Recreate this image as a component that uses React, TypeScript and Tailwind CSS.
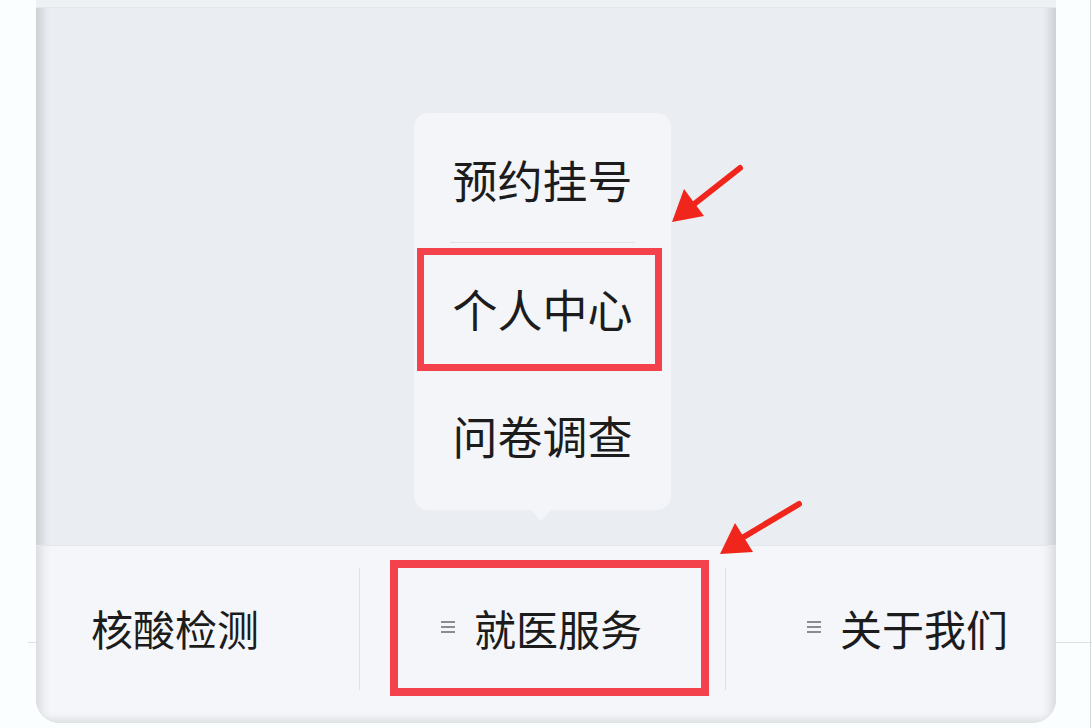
import React from "react";

const font = { fontFamily: '"Noto Sans CJK SC", "Noto Sans", sans-serif' };

function MenuIcon() {
  return (
    <div className="flex flex-col gap-[3.5px] w-[14px] mr-[19px] mt-[-4px]">
      <div className="h-[1.5px] bg-[#8a8d90]" />
      <div className="h-[1.5px] bg-[#8a8d90]" />
      <div className="h-[1.5px] bg-[#8a8d90]" />
    </div>
  );
}

export default function App() {
  return (
    <div className="relative w-[1092px] h-[728px] bg-[#fbfefe] overflow-hidden" style={font}>
      {/* faint background lines */}
      <div className="absolute left-[1056px] top-[642px] w-[36px] h-px bg-[#dde1e3]" />
      <div className="absolute left-[28px] top-[642px] w-[10px] h-px bg-[#dde1e3]" />
      <div className="absolute left-[1090px] top-0 w-px h-[728px] bg-[#d6d9db]" />

      {/* phone panel */}
      <div className="relative ml-[36px] w-[1020px] h-[723px] rounded-b-[24px] bg-[#eaedf1] overflow-hidden flex flex-col shadow-[inset_14px_0_10px_-8px_rgba(0,0,0,0.13),inset_-14px_0_10px_-8px_rgba(0,0,0,0.13)]">
        <div className="h-[8px] bg-[#eef1f4] border-b border-[#e4e7eb]" />
        <div className="flex-1" />
        {/* tab bar */}
        <div className="h-[178px] bg-[#f4f6f9] border-t border-[#e3e6ea] flex items-start pt-[22px] shadow-[inset_14px_0_10px_-8px_rgba(0,0,0,0.1),inset_-14px_0_10px_-8px_rgba(0,0,0,0.1),inset_0_-10px_8px_-6px_rgba(0,0,0,0.1)]">
          <div className="w-[324px] h-[122px] flex items-center pl-[55px] border-r border-[#dfe2e5]">
            <span className="text-[42px] leading-none text-[#1c1c1c] mt-[-3px]">核酸检测</span>
          </div>
          <div className="w-[366px] h-[122px] flex items-center pl-[81px] border-r border-[#dfe2e5]">
            <MenuIcon />
            <span className="text-[42px] leading-none text-[#1c1c1c] mt-[-3px]">就医服务</span>
          </div>
          <div className="flex-1 h-[122px] flex items-center pl-[81px]">
            <MenuIcon />
            <span className="text-[42px] leading-none text-[#1c1c1c] mt-[-3px]">关于我们</span>
          </div>
        </div>
      </div>

      {/* popup menu */}
      <div className="absolute left-[414px] top-[113px] w-[257px] h-[397px] bg-[#f3f5f8] rounded-[14px] flex flex-col">
        <div className="h-[129px] flex items-center justify-center pt-[4px]">
          <span className="text-[45px] leading-none text-[#1c1c1c]">预约挂号</span>
        </div>
        <div className="mx-[36px] h-px bg-[#dde3e8]" />
        <div className="h-[130px] flex items-center justify-center">
          <span className="text-[45px] leading-none text-[#1c1c1c]">个人中心</span>
        </div>
        <div className="h-[124px] flex items-center justify-center">
          <span className="text-[45px] leading-none text-[#1c1c1c]">问卷调查</span>
        </div>
        <div className="absolute left-[117px] -bottom-[11px] w-0 h-0 border-l-[10px] border-r-[10px] border-t-[11px] border-l-transparent border-r-transparent border-t-[#f3f5f8]" />
      </div>

      {/* annotations */}
      <div className="absolute left-[417px] top-[248px] w-[245px] h-[123px] border-[7px] border-[#f4424c]" />
      <div className="absolute left-[390px] top-[560px] w-[319px] h-[136px] border-[8px] border-[#f4424c]" />
      <svg className="absolute left-0 top-0 pointer-events-none" width="1092" height="728">
        <line x1="740" y1="168" x2="693" y2="205" stroke="#f0261c" strokeWidth="6" strokeLinecap="round" />
        <polygon points="672,222 684,189 704,216" fill="#f0261c" />
        <line x1="799" y1="504" x2="742" y2="538" stroke="#f0261c" strokeWidth="6" strokeLinecap="round" />
        <polygon points="720,554 735,523 753,552" fill="#f0261c" />
      </svg>
    </div>
  );
}
